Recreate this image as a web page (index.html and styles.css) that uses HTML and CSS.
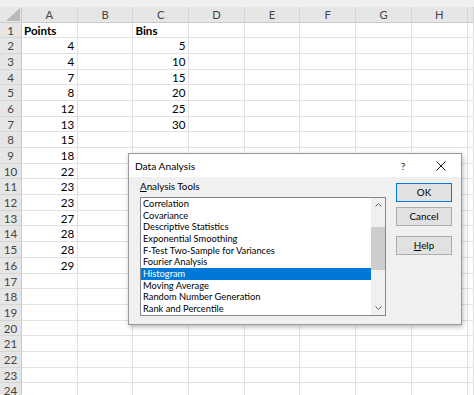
FILE: index.html
```html
<!DOCTYPE html>
<html>
<head>
<meta charset="utf-8">
<link rel="stylesheet" href="styles.css">
</head>
<body>
<div class="topstrip"></div>
<div class="sheet">
  <div class="row head">
    <div class="corner"><svg width="14" height="13" viewBox="0 0 14 13"><polygon points="14,0 14,13 0,13" fill="#b9b9b9"/></svg></div>
    <div>A</div><div>B</div><div>C</div><div>D</div><div>E</div><div>F</div><div>G</div><div>H</div><div></div>
  </div>
  <div class="row"><div class="rh">1</div><div class="b">Points</div><div></div><div class="b">Bins</div><div></div><div></div><div></div><div></div><div></div><div></div></div>
  <div class="row"><div class="rh">2</div><div class="n">4</div><div></div><div class="n">5</div><div></div><div></div><div></div><div></div><div></div><div></div></div>
  <div class="row"><div class="rh">3</div><div class="n">4</div><div></div><div class="n">10</div><div></div><div></div><div></div><div></div><div></div><div></div></div>
  <div class="row"><div class="rh">4</div><div class="n">7</div><div></div><div class="n">15</div><div></div><div></div><div></div><div></div><div></div><div></div></div>
  <div class="row"><div class="rh">5</div><div class="n">8</div><div></div><div class="n">20</div><div></div><div></div><div></div><div></div><div></div><div></div></div>
  <div class="row"><div class="rh">6</div><div class="n">12</div><div></div><div class="n">25</div><div></div><div></div><div></div><div></div><div></div><div></div></div>
  <div class="row"><div class="rh">7</div><div class="n">13</div><div></div><div class="n">30</div><div></div><div></div><div></div><div></div><div></div><div></div></div>
  <div class="row"><div class="rh">8</div><div class="n">15</div><div></div><div></div><div></div><div></div><div></div><div></div><div></div><div></div></div>
  <div class="row"><div class="rh">9</div><div class="n">18</div><div></div><div></div><div></div><div></div><div></div><div></div><div></div><div></div></div>
  <div class="row"><div class="rh">10</div><div class="n">22</div><div></div><div></div><div></div><div></div><div></div><div></div><div></div><div></div></div>
  <div class="row"><div class="rh">11</div><div class="n">23</div><div></div><div></div><div></div><div></div><div></div><div></div><div></div><div></div></div>
  <div class="row"><div class="rh">12</div><div class="n">23</div><div></div><div></div><div></div><div></div><div></div><div></div><div></div><div></div></div>
  <div class="row"><div class="rh">13</div><div class="n">27</div><div></div><div></div><div></div><div></div><div></div><div></div><div></div><div></div></div>
  <div class="row"><div class="rh">14</div><div class="n">28</div><div></div><div></div><div></div><div></div><div></div><div></div><div></div><div></div></div>
  <div class="row"><div class="rh">15</div><div class="n">28</div><div></div><div></div><div></div><div></div><div></div><div></div><div></div><div></div></div>
  <div class="row"><div class="rh">16</div><div class="n">29</div><div></div><div></div><div></div><div></div><div></div><div></div><div></div><div></div></div>
  <div class="row"><div class="rh">17</div><div></div><div></div><div></div><div></div><div></div><div></div><div></div><div></div><div></div></div>
  <div class="row"><div class="rh">18</div><div></div><div></div><div></div><div></div><div></div><div></div><div></div><div></div><div></div></div>
  <div class="row"><div class="rh">19</div><div></div><div></div><div></div><div></div><div></div><div></div><div></div><div></div><div></div></div>
  <div class="row"><div class="rh">20</div><div></div><div></div><div></div><div></div><div></div><div></div><div></div><div></div><div></div></div>
  <div class="row"><div class="rh">21</div><div></div><div></div><div></div><div></div><div></div><div></div><div></div><div></div><div></div></div>
  <div class="row"><div class="rh">22</div><div></div><div></div><div></div><div></div><div></div><div></div><div></div><div></div><div></div></div>
  <div class="row"><div class="rh">23</div><div></div><div></div><div></div><div></div><div></div><div></div><div></div><div></div><div></div></div>
  <div class="row"><div class="rh">24</div><div></div><div></div><div></div><div></div><div></div><div></div><div></div><div></div><div></div></div>
</div>

<div class="dialog">
  <div class="titlebar">
    <span class="title">Data Analysis</span>
    <span class="qmark">?</span>
    <span class="close"><svg width="10" height="10" viewBox="0 0 10 10"><path d="M0.5 0.5 L9.5 9.5 M9.5 0.5 L0.5 9.5" stroke="#1a1a1a" stroke-width="1" fill="none"/></svg></span>
  </div>
  <div class="dbody">
    <div class="leftcol">
      <div class="label"><u>A</u>nalysis Tools</div>
      <div class="listbox">
        <ul class="items">
          <li>Correlation</li>
          <li>Covariance</li>
          <li>Descriptive Statistics</li>
          <li>Exponential Smoothing</li>
          <li>F-Test Two-Sample for Variances</li>
          <li>Fourier Analysis</li>
          <li class="sel">Histogram</li>
          <li>Moving Average</li>
          <li>Random Number Generation</li>
          <li>Rank and Percentile</li>
        </ul>
        <div class="scrollbar">
          <div class="arrow"><svg width="7" height="4" viewBox="0 0 7 4"><path d="M0.5 3.5 L3.5 0.5 L6.5 3.5" stroke="#606060" fill="none"/></svg></div>
          <div class="track"><div class="thumb"></div></div>
          <div class="arrow"><svg width="7" height="4" viewBox="0 0 7 4"><path d="M0.5 0.5 L3.5 3.5 L6.5 0.5" stroke="#606060" fill="none"/></svg></div>
        </div>
      </div>
    </div>
    <div class="buttons">
      <div class="btn default">OK</div>
      <div class="btn">Cancel</div>
      <div class="btn helpbtn"><u>H</u>elp</div>
    </div>
  </div>
</div>
</body>
</html>
```
FILE: styles.css
```css
html, body {
  margin: 0;
  padding: 0;
}
body {
  width: 474px;
  height: 395px;
  overflow: hidden;
  background: #ffffff;
  font-family: Lato, "Liberation Sans", sans-serif;
  position: relative;
  color: #000;
}
.topstrip {
  height: 7px;
  background: #efefef;
}
.row {
  display: grid;
  grid-template-columns: 22px repeat(8, 55.7px) 1fr;
  height: 15.7px;
}
.row > div {
  box-sizing: border-box;
  border-right: 1px solid #e1e1e1;
  border-bottom: 1px solid #e1e1e1;
  font-size: 11.6px;
  line-height: 16px;
  white-space: nowrap;
  overflow: hidden;
  padding: 0 2px;
}
.row.head {
  height: 15.5px;
  background: #e6e6e6;
}
.row.head > div {
  text-align: center;
  color: #444;
  font-size: 11.2px;
  line-height: 15px;
  border-right: 1px solid #d4d4d4;
  border-bottom: 1px solid #c9c9c9;
}
.row.head > .corner {
  position: relative;
  border-right: 1px solid #c9c9c9;
  padding: 0;
}
.corner svg {
  display: block;
  margin: 1px 0 0 6px;
}
.row > .rh {
  background: #e6e6e6;
  text-align: center;
  color: #444;
  border-right: 1px solid #c9c9c9;
  border-bottom: 1px solid #d6d6d6;
  padding: 0;
}
.row > .b {
  font-weight: 700;
}
.row > .n {
  text-align: right;
  padding-right: 2.5px;
}

/* dialog */
.dialog {
  position: absolute;
  left: 128px;
  top: 153px;
  width: 334px;
  height: 172px;
  box-sizing: border-box;
  border: 1px solid #9a9a9a;
  background: #f0f0f0;
  box-shadow: 1px 2px 5px rgba(0, 0, 0, 0.28);
  font-family: Lato, "Liberation Sans", sans-serif;
  display: flex;
  flex-direction: column;
}
.titlebar {
  height: 23px;
  background: #ffffff;
  display: flex;
  align-items: center;
  font-size: 10.2px;
  flex: none;
}
.title {
  padding-left: 6px;
  flex: 1;
  color: #000;
}
.qmark {
  width: 12px;
  text-align: center;
  margin-right: 27px;
  color: #222;
}
.close {
  display: flex;
  margin-right: 15px;
}
.dbody {
  flex: 1;
  display: flex;
  padding-left: 11px;
}
.leftcol {
  width: 246px;
  display: flex;
  flex-direction: column;
}
.label {
  font-size: 9.8px;
  line-height: 13px;
  margin-top: 3px;
  color: #000;
}
.listbox {
  margin-top: 3.5px;
  height: 119px;
  box-sizing: border-box;
  border: 1px solid #828790;
  background: #fff;
  display: flex;
}
.items {
  list-style: none;
  margin: 0;
  padding: 0.5px 0 0 0;
  flex: 1;
  font-size: 9.3px;
}
.items li {
  height: 11.67px;
  line-height: 11.67px;
  padding-left: 2px;
  color: #000;
  white-space: nowrap;
}
.items li.sel {
  background: #0078d7;
  color: #fff;
}
.scrollbar {
  width: 14px;
  background: #f0f0f0;
  display: flex;
  flex-direction: column;
}
.arrow {
  height: 14px;
  display: flex;
  align-items: center;
  justify-content: center;
}
.track {
  flex: 1;
  padding-top: 15px;
}
.thumb {
  height: 43px;
  background: #cdcdcd;
}
.buttons {
  margin-left: 10px;
  padding-top: 6px;
  display: flex;
  flex-direction: column;
}
.btn {
  width: 56px;
  height: 19px;
  box-sizing: border-box;
  border: 1px solid #adadad;
  background: #e1e1e1;
  font-size: 9.8px;
  line-height: 17px;
  text-align: center;
  color: #000;
  margin-bottom: 4.5px;
}
.btn.default {
  border: 1px solid #0078d7;
}
.btn.helpbtn {
  margin-top: 5.5px;
}
```
